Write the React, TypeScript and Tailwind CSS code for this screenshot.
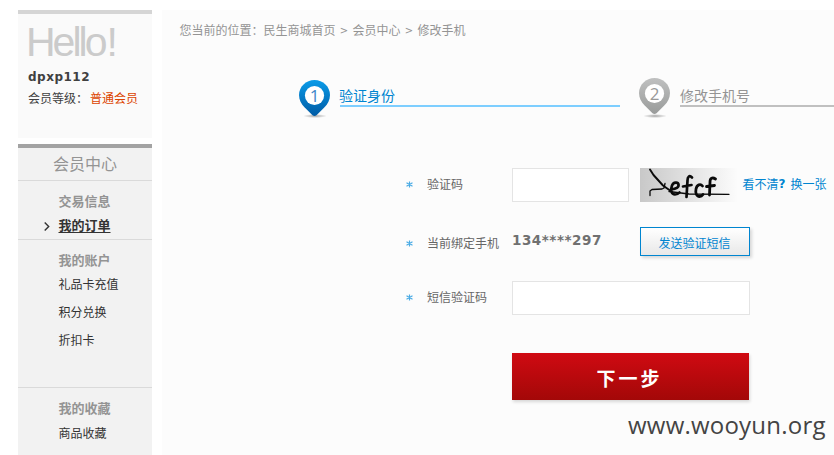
import React from "react";

const cjk = "font-['Noto_Sans_CJK_SC',sans-serif]";

function Pin({ n, from, to, ink }: { n: number; from: string; to: string; ink: string }) {
  return (
    <svg width="32" height="42" viewBox="0 0 32 42" className="block shrink-0">
      <defs>
        <linearGradient id={`pin${n}`} x1="0" y1="0" x2="0" y2="1">
          <stop offset="0" stopColor={from} />
          <stop offset="1" stopColor={to} />
        </linearGradient>
        <radialGradient id={`shade${n}`}>
          <stop offset="0" stopColor="#000" stopOpacity=".35" />
          <stop offset="1" stopColor="#000" stopOpacity="0" />
        </radialGradient>
      </defs>
      <ellipse cx="16" cy={n === 1 ? 36 : 38} rx="12" ry="2" fill={`url(#shade${n})`} />
      <path
        d="M15.500 0C7 0 0 6.700 0 15c0 5 2.300 9 5.500 12.300l8 8q2 1.500 4 0l8-8C28.700 24 31 20 31 15 31 6.700 24 0 15.500 0Z"
        fill={`url(#pin${n})`}
      />
      <circle cx="15.500" cy="15.500" r="9.600" fill="#fff" />
      <text x="15.500" y="21.600" textAnchor="middle" fontSize="17" fill={ink} fontFamily="'Open Sans', sans-serif">
        {n}
      </text>
    </svg>
  );
}

function Label({ children }: { children: React.ReactNode }) {
  return (
    <div className="flex w-[106px] shrink-0 items-center pb-[2px] text-[12px] text-[#666]">
      <svg width="7" height="7" viewBox="0 0 7 7" className="mr-[14px] mt-px">
        <path d="M3.500 .5v6M.5 1.800l6 3.400M.5 5.200l6-3.400" stroke="#4aabe4" strokeWidth="1.200" />
      </svg>
      {children}
    </div>
  );
}

function Captcha() {
  return (
    <svg width="98" height="34" viewBox="0 0 98 34" className="ml-[11px] block shrink-0">
      <defs>
        <linearGradient id="captcha">
          <stop offset="0" stopColor="#c8c8c8" />
          <stop offset="1" stopColor="#fcfcfc" />
        </linearGradient>
      </defs>
      <rect width="98" height="34" fill="url(#captcha)" />
      <g fill="none" stroke="#0a0a0a" strokeLinecap="round" strokeLinejoin="round">
        <path d="M10 1.500 13.500 7 23 17.500l7 5" strokeWidth="1.900" />
        <path d="M10 27.500V23l2-1.500 10-.5 2-1 1-4.500" strokeWidth="1.300" />
        <path d="M29 23.500 49 26l40 .3" strokeWidth="1.300" />
        <path d="M31.500 21.500c4.500-.5 7.500-2 7-5-.5-2.700-5-2.500-6.500 1-1.800 4.500-.5 9 3 9 2 0 3.500-.8 4.500-2" strokeWidth="2.700" />
        <path d="M52 9.500c-2.500-2.500-4.500-1-4.500 3L46.500 29M43 18.500l8.500-1.500" strokeWidth="2.700" />
        <path d="M62.500 18c-2-2.500-5.500-1.500-6.500 3-.8 4 .5 7.500 3.500 7.500 1.500 0 2.700-.8 3.500-2" strokeWidth="2.800" />
        <path d="M75.500 11c-3-2-5.500-1-5.500 3l-.5 13M66.500 18.500l8-1" strokeWidth="2.800" />
      </g>
    </svg>
  );
}

function Item({ children }: { children: React.ReactNode }) {
  return <a className="mb-1 block h-6 pl-[40.500px] text-[12px] leading-6 text-[#333]">{children}</a>;
}

function Heading({ children }: { children: React.ReactNode }) {
  return <h3 className="h-6 pl-[40.500px] text-[13px] font-bold leading-[23px] text-[#949494]">{children}</h3>;
}

function Sidebar() {
  return (
    <aside className="flex w-[134px] shrink-0 flex-col">
      <div className="h-[128px] border-t-4 border-[#d5d5d5] bg-[#fafafa] pl-[10px]">
        <div className="-ml-[2px] h-[52px] pt-[3px] font-['Liberation_Sans',sans-serif] text-[41px] leading-[50px] tracking-[-3px] text-[#cbcbcb]">
          Hello<span className="ml-[2px]">!</span>
        </div>
        <div className="h-[21px] font-['DejaVu_Sans',sans-serif] text-[12px] font-bold leading-[22px] tracking-[0.500px] text-[#404040]">
          dpxp112
        </div>
        <div className="flex h-[22px] text-[12px] leading-[22px] text-[#404040]">
          <span className="w-[62px]">会员等级：</span>
          <span className="text-[#dc4400]">普通会员</span>
        </div>
      </div>
      <nav className="mt-[6px] flex-1 border-t-4 border-[#a3a3a3] bg-[#f2f2f2]">
        <h2 className="h-[33px] border-b border-[#dadada] text-center text-[16px] leading-[31px] text-[#949494]">会员中心</h2>
        <section className="h-[59px] border-b border-[#dadada] pt-2">
          <Heading>交易信息</Heading>
          <div className="flex h-[24px] items-center pl-[26px] text-[13px] font-bold leading-[24px] text-[#333]">
            <svg width="6" height="9" viewBox="0 0 6 9" className="mr-[8.500px] mt-[2px]">
              <path d="m.7.5 4 4-4 4" fill="none" stroke="#333" strokeWidth="1.400" />
            </svg>
            <span className="underline underline-offset-2">我的订单</span>
          </div>
        </section>
        <section className="h-[148px] border-b border-[#dadada] pt-2">
          <Heading>我的账户</Heading>
          <Item>礼品卡充值</Item>
          <Item>积分兑换</Item>
          <Item>折扣卡</Item>
        </section>
        <section className="pt-2">
          <Heading>我的收藏</Heading>
          <div className="pt-px">
            <Item>商品收藏</Item>
          </div>
        </section>
      </nav>
    </aside>
  );
}

export default function App() {
  return (
    <div className={`flex h-[455px] w-[834px] overflow-hidden bg-white pl-[18px] pt-[10px] ${cjk}`}>
      <Sidebar />
      <main className="ml-[10px] w-[672px] shrink-0 bg-[#fcfcfc]">
        <div className="flex h-[40px] items-center gap-[4px] pl-[17.500px] text-[12px] text-[#949494]">
          <span>您当前的位置：民生商城首页</span>
          <span className="w-[9px] text-center font-['DejaVu_Sans',sans-serif] text-[10px]">&gt;</span>
          <span>会员中心</span>
          <span className="w-[9px] text-center font-['DejaVu_Sans',sans-serif] text-[10px]">&gt;</span>
          <span>修改手机</span>
        </div>
        <div className="flex h-[118px] items-start pl-[137px] pt-[28px]">
          <div className="pt-[2px]">
            <Pin n={1} from="#0a9be8" to="#005ba5" ink="#4287c8" />
          </div>
          <div className="ml-[9px] mt-[7px] h-[22px] w-[280px] border-b-2 border-[#7dceff] text-[14px] leading-[20px] text-[#0085d0]">
            <span className="-ml-px">验证身份</span>
          </div>
          <div className="ml-[19px]">
            <Pin n={2} from="#bfc0c0" to="#999b9a" ink="#999" />
          </div>
          <div className="ml-[9px] mt-[7px] h-[22px] w-[154px] shrink-0 border-b-2 border-[#c0c0c0] text-[14px] leading-[20px] text-[#949494]">
            修改手机号
          </div>
        </div>
        <form className="pl-[244px]">
          <div className="flex h-[34px] items-center">
            <Label>验证码</Label>
            <input className="h-[34px] w-[117px] shrink-0 border border-[#e4e4e4] bg-white" />
            <Captcha />
            <a className="ml-[4.500px] flex shrink-0 pb-[2px] text-[12px] text-[#0085d0]">
              <span>看不清</span>
              <span className="w-[12px] font-['DejaVu_Sans',sans-serif] font-bold">?</span>
              <span>换一张</span>
            </a>
          </div>
          <div className="mt-[25px] flex h-[29px] items-center">
            <div className="pt-[4px]">
              <Label>当前绑定手机</Label>
            </div>
            <span className="w-[128px] pb-[2px] font-['DejaVu_Sans',sans-serif] text-[13.500px] font-bold tracking-[0.520px] text-[#707070]">
              134****297
            </span>
            <button
              type="button"
              className="h-[29px] w-[110px] border border-[#0085d0] bg-linear-to-b from-white to-[#e8e8e8] pr-px pt-[3px] text-[12px] leading-[24px] text-[#0085d0] shadow-[2px_2px_3px_#00000026]"
            >
              发送验证短信
            </button>
          </div>
          <div className="mt-[25px] flex h-[34px] items-center">
            <Label>短信验证码</Label>
            <input className="h-[34px] w-[238px] border border-[#e4e4e4] bg-white" />
          </div>
          <button
            type="button"
            className="ml-[106px] mt-[38px] block h-[47px] w-[237px] bg-linear-to-b from-[#d00a12] to-[#a30808] pr-[2px] pt-[2px] text-[19px] font-bold leading-[44px] tracking-[3px] text-white shadow-[1px_2px_3px_#00000026]"
          >
            下一步
          </button>
        </form>
        <div className="mt-[7px] pl-[466px] font-['Open_Sans','Noto_Sans',sans-serif] text-[24px] leading-[36px] tracking-[0.220px] text-[#444]">
          www.wooyun.org
        </div>
      </main>
    </div>
  );
}
